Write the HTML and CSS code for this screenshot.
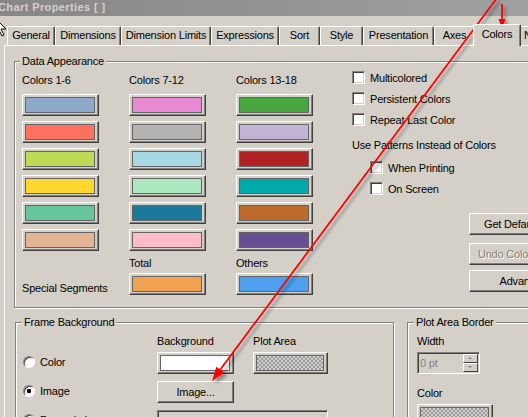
FILE: index.html
```html
<!doctype html>
<html>
<head>
  <meta charset="utf-8">
  <meta name="viewport" content="width=device-width,initial-scale=1">
  <title>Chart Properties</title>
  <link rel="stylesheet" href="styles.css">
</head>
<body>
  <div id="window">
    <div id="titlebar">Chart Properties [ ]</div>

    <div class="tabs">
      <div class="tab tab-general">General</div>
      <div class="tab tab-dims">Dimensions</div>
      <div class="tab tab-limits">Dimension Limits</div>
      <div class="tab tab-expr">Expressions</div>
      <div class="tab tab-sort">Sort</div>
      <div class="tab tab-style">Style</div>
      <div class="tab tab-pres">Presentation</div>
      <div class="tab tab-axes">Axes</div>
      <div class="tab tab-colors active">Colors</div>
      <div class="tab tab-number">Number</div>
    </div>

    <div class="panel">
      <div class="group data-group">
        <div class="group-title">Data Appearance</div>
        <div class="data-body">
          <div class="palette">
            <div class="swatches">
              <div class="col-label">Colors 1-6</div>
              <div class="col-label">Colors 7-12</div>
              <div class="col-label">Colors 13-18</div>

              <div class="color-btn"><span class="swatch c1"></span></div>
              <div class="color-btn"><span class="swatch c7"></span></div>
              <div class="color-btn"><span class="swatch c13"></span></div>

              <div class="color-btn"><span class="swatch c2"></span></div>
              <div class="color-btn"><span class="swatch c8"></span></div>
              <div class="color-btn"><span class="swatch c14"></span></div>

              <div class="color-btn"><span class="swatch c3"></span></div>
              <div class="color-btn"><span class="swatch c9"></span></div>
              <div class="color-btn"><span class="swatch c15"></span></div>

              <div class="color-btn"><span class="swatch c4"></span></div>
              <div class="color-btn"><span class="swatch c10"></span></div>
              <div class="color-btn"><span class="swatch c16"></span></div>

              <div class="color-btn"><span class="swatch c5"></span></div>
              <div class="color-btn"><span class="swatch c11"></span></div>
              <div class="color-btn"><span class="swatch c17"></span></div>

              <div class="color-btn"><span class="swatch c6"></span></div>
              <div class="color-btn"><span class="swatch c12"></span></div>
              <div class="color-btn"><span class="swatch c18"></span></div>
            </div>

            <div class="specials">
              <div></div>
              <div class="col-label">Total</div>
              <div class="col-label">Others</div>
              <div class="label-end">Special Segments</div>
              <div class="color-btn"><span class="swatch total"></span></div>
              <div class="color-btn"><span class="swatch others"></span></div>
            </div>
          </div>

          <div class="options">
            <div class="check"><span class="box"></span>Multicolored</div>
            <div class="check"><span class="box"></span>Persistent Colors</div>
            <div class="check"><span class="box"></span>Repeat Last Color</div>
            <div class="hint">Use Patterns Instead of Colors</div>
            <div class="check sub"><span class="box"></span>When Printing</div>
            <div class="check sub"><span class="box"></span>On Screen</div>

            <div class="side-buttons">
              <div class="btn">Get Default Colors</div>
              <div class="btn disabled">Undo Color Changes</div>
              <div class="btn">Advanced...</div>
            </div>
          </div>
        </div>
      </div>

      <div class="bottom-row">
        <div class="group frame-group">
          <div class="group-title">Frame Background</div>
          <div class="frame-grid">
            <div></div>
            <div class="col-label">Background</div>
            <div class="col-label">Plot Area</div>

            <div class="radio-row"><span class="radio"></span>Color</div>
            <div class="color-btn"><span class="swatch white"></span></div>
            <div class="color-btn"><span class="swatch checker"></span></div>

            <div class="radio-row"><span class="radio on"></span>Image</div>
            <div class="btn">Image...</div>
            <div></div>

            <div class="radio-row"><span class="radio"></span>Dynamic Image</div>
            <div class="path-box"></div>
          </div>
        </div>

        <div class="group plot-group">
          <div class="group-title">Plot Area Border</div>
          <div class="field-label">Width</div>
          <div class="spin">
            <span class="spin-value">0 pt</span>
            <span class="spin-arrows"><span class="up"></span><span class="down"></span></span>
          </div>
          <div class="field-label color-label">Color</div>
          <div class="color-btn border-color"><span class="swatch checker"></span></div>
        </div>
      </div>
    </div>
  </div>

  <!-- annotation arrows drawn over the dialog -->
  <svg class="marks" width="528" height="417" viewBox="0 0 528 417">
    <defs>
      <filter id="shade" x="-20%" y="-20%" width="140%" height="140%">
        <feDropShadow dx="3" dy="3" stdDeviation="1.5" flood-color="#000" flood-opacity="0.35"/>
      </filter>
    </defs>
    <g filter="url(#shade)" fill="#f00" stroke="#f00">
      <line x1="497" y1="-2" x2="217" y2="374" stroke-width="1.8"/>
      <polygon points="212,381 224.4,372.8 216.4,366.8" stroke="none"/>
      <line x1="502" y1="4" x2="502" y2="22" stroke-width="1.8"/>
      <polygon points="502,29 498.5,19 505.5,19" stroke="none"/>
    </g>
  </svg>

  <svg class="cursor" width="12" height="20" viewBox="0 0 12 20">
    <path d="M-5 0 L-5 16 L-1 12 L2 18 L4 17 L1 11 L6 11 Z" fill="#fff" stroke="#000" stroke-width="1"/>
  </svg>
</body>
</html>
```

FILE: styles.css
```css
html, body {
  margin: 0;
  height: 100%;
  overflow: hidden;
}

body {
  position: relative;
  background: #d4d0c8;
  color: #000;
  font: 11px "Liberation Sans", Arial, sans-serif;
  letter-spacing: -0.2px;
}

#window {
  width: 640px;
}

#titlebar {
  height: 16px;
  line-height: 15px;
  text-indent: -2px;
  font-weight: bold;
  letter-spacing: 0.4px;
  color: #d4d0c8;
  background: linear-gradient(90deg, #868686, #a6a6a6);
  white-space: nowrap;
}

/* tab strip */
.tabs {
  display: flex;
  align-items: flex-end;
  height: 29px;
  padding-left: 7px;
}

.tab {
  box-sizing: border-box;
  flex: none;
  height: 19px;
  line-height: 17px;
  text-align: center;
  white-space: nowrap;
  overflow: hidden;
  border-top: 1px solid #fff;
  border-left: 1px solid #fff;
  border-right: 1px solid #404040;
  border-radius: 2px 2px 0 0;
  box-shadow: inset -1px 0 #808080;
}

.tab.active {
  position: relative;
  z-index: 1;
  height: 22px;
  line-height: 19px;
  margin: 0 -2px -1px;
  background: #d4d0c8;
}

.tab-general { width: 48px; }
.tab-dims { width: 66px; }
.tab-limits { width: 90px; }
.tab-expr { width: 68px; }
.tab-sort { width: 41px; }
.tab-style { width: 43px; }
.tab-pres { width: 71px; }
.tab-axes { width: 41px; }
.tab-colors { width: 48px; }
.tab-number { width: 60px; text-align: left; padding-left: 4px; }

.panel {
  height: 400px;
  margin-left: 4px;
  padding-left: 9px;
  border-top: 1px solid #fff;
  border-left: 1px solid #fff;
}

/* etched group boxes */
.group {
  box-sizing: border-box;
  border: 1px solid #808080;
  box-shadow: inset 1px 1px #fff, 1px 1px #fff;
}

.group-title {
  width: fit-content;
  margin-top: -7px;
  padding: 0 2px;
  line-height: 13px;
  background: #d4d0c8;
  white-space: nowrap;
}

.data-group {
  width: 600px;
  margin-top: 15px;
  padding: 0 0 12px 7px;
}

.data-group .group-title {
  margin-left: -2px;
}

.data-body {
  display: flex;
  margin-top: 3px;
}

.palette {
  width: 291px;
  padding-top: 3px;
}

.swatches,
.specials {
  display: grid;
  grid-template-columns: repeat(3, 77px);
  column-gap: 30px;
}

.swatches {
  row-gap: 5px;
}

.col-label {
  line-height: 13px;
  margin-bottom: 2px;
  white-space: nowrap;
}

.specials {
  grid-template-rows: 13px 22px;
  row-gap: 3px;
  margin-top: 6px;
}

.specials .col-label {
  margin-bottom: 0;
}

.label-end {
  align-self: end;
  line-height: 13px;
  white-space: nowrap;
}

/* colour buttons */
.color-btn {
  box-sizing: border-box;
  height: 22px;
  padding: 2px 3px 2px 2px;
  border: 1px solid;
  border-color: #fff #404040 #404040 #fff;
  box-shadow: inset -1px -1px #808080;
}

.swatch {
  display: block;
  box-sizing: border-box;
  height: 100%;
  border: 1px solid #646464;
}

.c1 { background: #8eaacb; }
.c2 { background: #fe7161; }
.c3 { background: #bcda56; }
.c4 { background: #fed82e; }
.c5 { background: #66c59a; }
.c6 { background: #e4b594; }
.c7 { background: #e78ad3; }
.c8 { background: #b3b3b3; }
.c9 { background: #a6d8e5; }
.c10 { background: #abe8bf; }
.c11 { background: #1b7a9c; }
.c12 { background: #febcc9; }
.c13 { background: #48a641; }
.c14 { background: #c3b3d7; }
.c15 { background: #b12224; }
.c16 { background: #01abab; }
.c17 { background: #bd6b2b; }
.c18 { background: #664f94; }
.total { background: #f2a152; }
.others { background: #4ca0ef; }
.white { background: #fff; }

.checker {
  background: repeating-conic-gradient(#9c9c9c 0 25%, #d0d0d0 0 50%) 0 0 / 4px 4px;
}

/* check boxes */
.options {
  margin-left: 39px;
}

.check {
  display: flex;
  align-items: center;
  height: 13px;
  white-space: nowrap;
}

.check + .check {
  margin-top: 8px;
}

.box {
  box-sizing: border-box;
  flex: none;
  width: 13px;
  height: 13px;
  margin-right: 5px;
  background: #fff;
  border: 1px solid;
  border-color: #808080 #fff #fff #808080;
  box-shadow: inset 1px 1px #404040, inset -1px -1px #d4d0c8;
}

.hint {
  margin-top: 13px;
  line-height: 13px;
  white-space: nowrap;
}

.hint + .check {
  margin-top: 9px;
}

.sub {
  margin-left: 18px;
}

/* push buttons */
.btn {
  box-sizing: border-box;
  height: 22px;
  line-height: 20px;
  text-align: center;
  white-space: nowrap;
  overflow: hidden;
  border: 1px solid;
  border-color: #fff #404040 #404040 #fff;
  box-shadow: inset -1px -1px #808080;
}

.btn.disabled {
  color: #808080;
  text-shadow: 1px 1px #fff;
}

.side-buttons {
  width: 117px;
  margin: 18px 0 0 117px;
}

.side-buttons .btn + .btn {
  margin-top: 8px;
}

.side-buttons .btn:last-child {
  margin-top: 5px;
}

/* lower groups */
.bottom-row {
  display: flex;
  align-items: flex-start;
  margin-top: 14px;
}

.frame-group {
  width: 379px;
  height: 120px;
  margin-left: 1px;
  padding-left: 7px;
}

.frame-group .group-title {
  margin-left: -1px;
}

.frame-grid {
  display: grid;
  grid-template-columns: 115px 77px 75px;
  grid-template-rows: auto repeat(3, 22px);
  column-gap: 19px;
  row-gap: 7px;
  margin-top: 6px;
}

.frame-grid .col-label {
  margin-bottom: -3px;
}

.radio-row {
  display: flex;
  align-items: center;
  height: 13px;
  margin-top: 3px;
  white-space: nowrap;
}

.radio {
  box-sizing: border-box;
  flex: none;
  width: 12px;
  height: 12px;
  margin-right: 5px;
  border-radius: 50%;
  background: #fff;
  border: 1px solid;
  border-color: #808080 #fff #fff #808080;
  box-shadow: inset 1px 1px #404040;
}

.radio.on {
  background: radial-gradient(circle, #000 0 2px, #fff 2.5px);
}

.path-box {
  grid-column: 2 / 4;
  box-sizing: border-box;
  border: 1px solid;
  border-color: #808080 #fff #fff #808080;
  box-shadow: inset 1px 1px #404040;
}

.plot-group {
  width: 200px;
  height: 120px;
  margin-left: 13px;
  padding-left: 9px;
}

.plot-group .group-title {
  margin-left: -3px;
}

.field-label {
  margin-top: 6px;
  line-height: 13px;
}

.color-label {
  margin-top: 13px;
}

.spin {
  box-sizing: border-box;
  display: flex;
  width: 63px;
  height: 22px;
  margin-top: 4px;
  border: 1px solid;
  border-color: #808080 #fff #fff #808080;
  box-shadow: inset 1px 1px #404040, inset -1px -1px #d4d0c8;
  padding: 1px 1px 1px 1px;
}

.spin-value {
  flex: 1;
  padding-left: 1px;
  line-height: 18px;
  color: #808080;
}

.spin-arrows {
  display: flex;
  flex-direction: column;
  width: 15px;
}

.spin-arrows span {
  position: relative;
  flex: 1;
  box-sizing: border-box;
  border: 1px solid;
  border-color: #fff #404040 #404040 #fff;
}

.spin-arrows span::after {
  content: "";
  position: absolute;
  left: 4px;
  top: 2px;
  border-left: 2px solid transparent;
  border-right: 2px solid transparent;
}

.spin-arrows .up::after {
  border-bottom: 2px solid #808080;
}

.spin-arrows .down::after {
  border-top: 2px solid #808080;
}

.border-color {
  width: 76px;
  margin-top: 4px;
}

/* overlays */
.marks {
  position: absolute;
  top: 0;
  left: 0;
  pointer-events: none;
}

.cursor {
  position: absolute;
  top: 18px;
  left: 0;
  pointer-events: none;
}
```
